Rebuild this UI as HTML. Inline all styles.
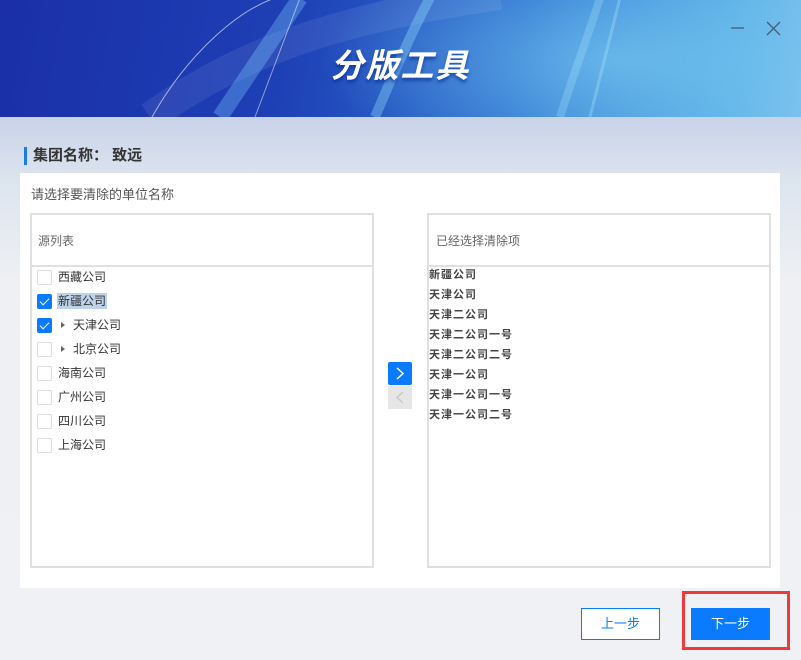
<!DOCTYPE html>
<html><head><meta charset="utf-8"><style>
*{margin:0;padding:0;box-sizing:border-box}
body{width:801px;height:660px;overflow:hidden;position:relative;font-family:"Liberation Sans","Noto Sans CJK SC",sans-serif;font-size:12px;color:#333;background:#eff1f4}
.hdr{position:absolute;left:0;top:0;width:801px;height:117px;background:radial-gradient(ellipse 300px 120px at 620px 60px,rgba(120,200,240,.7),transparent),linear-gradient(100deg,#1a2fa8 0%,#1e3fb5 35%,#2a6fd0 65%,#5ab0e6 90%,#7cc0ee 100%);overflow:hidden}
.bg{position:absolute;left:0;top:117px;width:801px;height:543px;background:linear-gradient(180deg,#c9d2e8 0%,#dde5ef 12%,#eef0f3 30%,#eff1f4 100%)}
.title{position:absolute;left:0;width:801px;top:39px;text-align:center;color:#fff;font-size:33px;font-weight:bold;font-style:italic;letter-spacing:2px;text-shadow:0 3px 3px rgba(0,40,140,.6)}
.grp{position:absolute;left:24px;top:147px;border-left:3px solid #1f7ae0;padding-left:6px;font-size:15px;font-weight:bold;color:#333;line-height:18px}
.panel{position:absolute;left:20px;top:173px;width:760px;height:415px;background:#fff}
.sub{position:absolute;left:31px;top:184px;font-size:13px;color:#555}
.box{position:absolute;top:213px;height:355px;border:2px solid #e0e0e0;background:#fff}
.bh{height:52px;border-bottom:2px solid #e0e0e0;padding:17px 0 0 6px;color:#666;font-size:12px}
.it{position:absolute;left:5px;height:16px;line-height:16px;font-size:12px;color:#333}
.cb{position:absolute;left:5px;width:15px;height:15px;border:1px solid #ddd;border-radius:2px;background:#fff}
.cb.on{background:#0a7aff;border-color:#0a7aff}
.cb.on:after{content:"";position:absolute;left:4px;top:1px;width:4px;height:8px;border:solid #fff;border-width:0 1.5px 1.5px 0;transform:rotate(45deg)}
.tri{position:absolute;width:0;height:0;border-left:4px solid #666;border-top:3px solid transparent;border-bottom:3px solid transparent}
.r{position:absolute;left:0;font-size:11px;font-weight:bold;color:#444;letter-spacing:1px}
.btn{position:absolute;top:608px;width:79px;height:32px;line-height:30px;text-align:center;font-size:13px}
</style></head><body>
<div class="hdr">
<svg width="801" height="117" style="position:absolute;left:0;top:0">
<path d="M150 117 C230 60 320 20 500 -5" stroke="rgba(255,255,255,.08)" stroke-width="30" fill="none"/>
<path d="M152 117 C190 50 240 10 275 -2" stroke="rgba(255,255,255,.6)" stroke-width="1" fill="none"/>
<path d="M220 117 L300 -2" stroke="rgba(120,200,255,.35)" stroke-width="16" fill="none"/>
<path d="M255 117 L300 -2" stroke="rgba(255,255,255,.5)" stroke-width="1" fill="none"/>
<path d="M375 117 C395 70 415 25 430 -2" stroke="rgba(150,230,255,.35)" stroke-width="10" fill="none"/>
<path d="M560 117 C575 70 590 30 600 -2" stroke="rgba(180,240,255,.25)" stroke-width="8" fill="none"/>
<path d="M590 117 L620 -2" stroke="rgba(180,240,255,.3)" stroke-width="3" fill="none"/>
<path d="M731 28 H744" stroke="#4a5a7a" stroke-width="1.3"/>
<path d="M767 22 L780 35 M780 22 L767 35" stroke="#4a5a7a" stroke-width="1.3"/>
</svg>
<div class="title">分版工具</div>
</div>
<div class="bg"></div>
<div class="grp">集团名称：&nbsp;致远</div>
<div class="panel"></div>
<div class="sub">请选择要清除的单位名称</div>
<div class="box" style="left:30px;width:344px">
<div class="bh">源列表</div>
<div class="cb" style="top:55px"></div><div class="it" style="left:26px;top:54px">西藏公司</div>
<div class="cb on" style="top:79px"></div><div class="it" style="left:25px;top:78px;background:#bcd3ea;padding:0 1px">新疆公司</div>
<div class="cb on" style="top:103px"></div><div class="tri" style="left:29px;top:107px"></div><div class="it" style="left:41px;top:102px">天津公司</div>
<div class="cb" style="top:127px"></div><div class="tri" style="left:29px;top:131px"></div><div class="it" style="left:41px;top:126px">北京公司</div>
<div class="cb" style="top:151px"></div><div class="it" style="left:26px;top:150px">海南公司</div>
<div class="cb" style="top:175px"></div><div class="it" style="left:26px;top:174px">广州公司</div>
<div class="cb" style="top:199px"></div><div class="it" style="left:26px;top:198px">四川公司</div>
<div class="cb" style="top:223px"></div><div class="it" style="left:26px;top:222px">上海公司</div>
</div>
<div style="position:absolute;left:388px;top:362px;width:24px;height:23px;background:#0a7aff;border-radius:2px"><svg width="24" height="23"><path d="M9 6 L15 11.5 L9 17" stroke="#fff" stroke-width="1.5" fill="none"/></svg></div>
<div style="position:absolute;left:388px;top:386px;width:24px;height:23px;background:#e6e6e6"><svg width="24" height="23"><path d="M15 6 L9 11.5 L15 17" stroke="#c8c8c8" stroke-width="1.5" fill="none"/></svg></div>
<div class="box" style="left:427px;width:344px">
<div class="bh" style="padding-left:7px">已经选择清除项</div>
<div class="r" style="top:51px">新疆公司</div>
<div class="r" style="top:71px">天津公司</div>
<div class="r" style="top:91px">天津二公司</div>
<div class="r" style="top:111px">天津二公司一号</div>
<div class="r" style="top:131px">天津二公司二号</div>
<div class="r" style="top:151px">天津一公司</div>
<div class="r" style="top:171px">天津一公司一号</div>
<div class="r" style="top:191px">天津一公司二号</div>
</div>
<div class="btn" style="left:581px;border:1px solid #0a7aff;color:#0a7aff;background:#fff">上一步</div>
<div style="position:absolute;left:682px;top:591px;width:108px;height:59px;border:3px solid #f03a3a"></div>
<div class="btn" style="left:691px;background:#0a7aff;color:#fff;line-height:32px">下一步</div>
</body></html>
